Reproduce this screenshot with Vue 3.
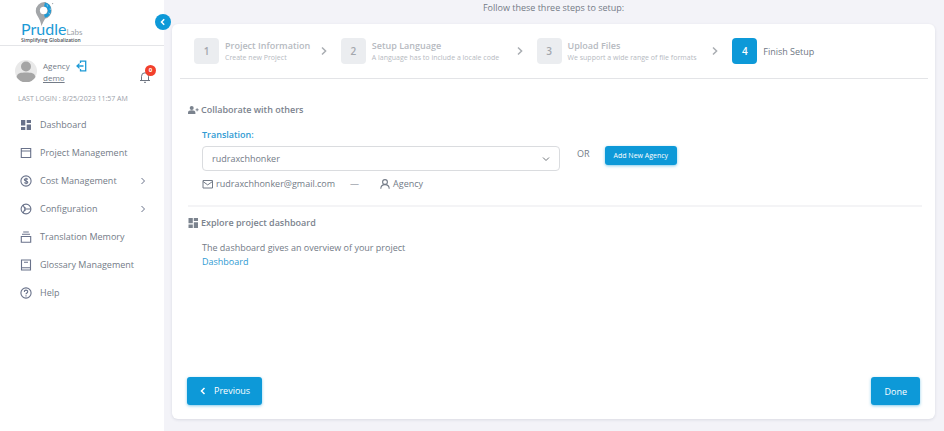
<script setup>
import { ref } from 'vue'

const menu = [
  { label: 'Dashboard', icon: 'dashboard' },
  { label: 'Project Management', icon: 'window' },
  { label: 'Cost Management', icon: 'dollar', expandable: true },
  { label: 'Configuration', icon: 'wheel', expandable: true },
  { label: 'Translation Memory', icon: 'stack' },
  { label: 'Glossary Management', icon: 'book' },
  { label: 'Help', icon: 'help' },
]

const steps = [
  { title: 'Project Information', hint: 'Create new Project' },
  { title: 'Setup Language', hint: 'A language has to include a locale code' },
  { title: 'Upload Files', hint: 'We support a wide range of file formats' },
  { title: 'Finish Setup', active: true },
]

const agency = ref('rudraxchhonker')
</script>

<template>
  <div class="page">
    <aside class="sidebar">
      <a class="brand" href="#">
        <svg class="pin" viewBox="0 0 20 24" aria-hidden="true">
          <path d="M9.500 0A8.800 8.800 0 0 0 .8 9c0 4.200 4.400 7 5.700 15 1.500-4 3-6 4-8V0z" fill="#a3a6a9" />
          <path d="M9.500 0a8.500 8.500 0 0 1 0 16.800c-1 .8-2 3-3 7.200l1-9z" fill="#a3a6a9" />
          <path d="M10 .6a7.800 7.800 0 0 1 0 15.200l-1-3.200 3-1.200 1-3-2-3-2-1z" fill="#1c9ad6" />
          <path d="M12 2.500l.6 2M14.500 7l2 .5M13.500 11l1.500 1" fill="none" stroke="#b9dff2" stroke-width=".7" />
          <circle cx="8.600" cy="8.500" r="3.700" fill="#fff" />
          <circle cx="17.600" cy="1.600" r=".7" fill="#a3a6a9" />
        </svg>
        <span class="wordmark">Prudle<span class="labs">Labs</span></span>
        <span class="tagline">Simplifying Globalization</span>
      </a>

      <div class="profile">
        <svg class="avatar" viewBox="0 0 22 22" aria-hidden="true">
          <circle cx="11" cy="11" r="11" fill="#e9e9e9" />
          <circle cx="11" cy="6.500" r="5" fill="#a5a5a5" />
          <path d="M1.500 17c1-4 4-4.500 9.500-4.500s8.500.5 9.500 4.500a11 11 0 0 1-19 0z" fill="#a5a5a5" />
        </svg>
        <div class="who">
          <span>Agency</span>
          <a href="#">demo</a>
        </div>
        <button class="icon-button logout" aria-label="Log out">
          <svg viewBox="0 0 12 12" fill="none" stroke="#1c9ad6" stroke-width="1.300">
            <path d="M4.500 3V1.200h5.200v9.600H4.500V9M1 6h6.500M3.500 3.600L1 6l2.500 2.400" />
          </svg>
        </button>
        <button class="icon-button bell" aria-label="Notifications">
          <svg viewBox="0 0 12 12" fill="none" stroke="#6d7480" stroke-width="1">
            <path d="M1 9.500h10M2.500 9.500V5.300a3.500 3.500 0 0 1 7 0v4.200M5 11.300h2" />
          </svg>
          <span class="count">0</span>
        </button>
      </div>
      <p class="last-login">LAST LOGIN : 8/25/2023 11:57 AM</p>

      <nav>
        <a v-for="item in menu" :key="item.label" href="#" class="nav-item">
          <svg viewBox="0 0 12 12" fill="none" stroke="currentColor" stroke-width="1.100" aria-hidden="true">
            <path v-if="item.icon === 'dashboard'" d="M1 1h4.300v5.500H1zM6.700 1H11v3H6.700zM1 8h4.300v3H1zM6.700 5.500H11V11H6.700z" fill="currentColor" stroke="none" />
            <path v-else-if="item.icon === 'window'" d="M1.300 1.500h9.400v9H1.300zM1.300 4h9.400" />
            <template v-else-if="item.icon === 'dollar'">
              <circle cx="6" cy="6" r="5.100" />
              <path d="M7.800 4.500C7 3.300 4.300 3.400 4.300 4.800S7.800 5.900 7.800 7.300 5 8.700 4.200 7.500M6 2.700v6.600" />
            </template>
            <template v-else-if="item.icon === 'wheel'">
              <circle cx="6" cy="6" r="4.900" />
              <path d="M5 6h6M5 6L3 1.800M5 6l-2 4.200M5 4v4" />
            </template>
            <path v-else-if="item.icon === 'stack'" d="M1.300 5.500h9.400v5.700H1.300zM2 3.200h8M3.200 1h5.600" />
            <path v-else-if="item.icon === 'book'" d="M1.500 1h9v10h-9zM1.500 8.700h9M4 3.300h4" />
            <template v-else>
              <circle cx="6" cy="6" r="5.100" />
              <path d="M4.300 4.900c0-2.300 3.400-2.300 3.400-.2C7.700 6 6 6 6 7.300M6 8.300v1.100" />
            </template>
          </svg>
          <span>{{ item.label }}</span>
          <svg v-if="item.expandable" class="more" viewBox="0 0 8 8" fill="none" stroke="currentColor" aria-hidden="true">
            <path d="M2.500 1l3 3-3 3" />
          </svg>
        </a>
      </nav>

      <button class="collapse" aria-label="Collapse menu">
        <svg viewBox="0 0 8 8" fill="none" stroke="#fff" stroke-width="1.500"><path d="M5.200 1.200L2.500 4l2.700 2.800" /></svg>
      </button>
    </aside>

    <main>
      <p class="intro">Follow these three steps to setup:</p>
      <div class="card">
        <ol class="steps">
          <li v-for="(step, i) in steps" :key="step.title" :class="{ active: step.active }">
            <span class="number">{{ i + 1 }}</span>
            <span class="step-text">
              <strong>{{ step.title }}</strong>
              <small v-if="step.hint">{{ step.hint }}</small>
            </span>
            <svg v-if="!step.active" class="arrow" viewBox="0 0 8 10" fill="none" stroke="#a9adb2" stroke-width="1.500" aria-hidden="true">
              <path d="M2 1.500L5.600 5 2 8.500" />
            </svg>
          </li>
        </ol>

        <section class="collaborate">
          <h2>
            <svg viewBox="0 0 12 10" fill="currentColor" aria-hidden="true">
              <circle cx="3.700" cy="2.900" r="2" /><path d="M0 9V7.800C0 6 1.500 5.300 3.700 5.300S7.400 6 7.400 7.800V9zM7.600 4.200h3v1h-3zM8.600 3.200h1v3h-1z" />
            </svg>
            Collaborate with others
          </h2>
          <div class="body">
            <label for="agency">Translation:</label>
            <div class="row">
              <div class="select">
                <select id="agency" v-model="agency">
                  <option>rudraxchhonker</option>
                </select>
                <svg viewBox="0 0 8 8" fill="none" stroke="#70757a" aria-hidden="true"><path d="M1 2.500l3 3 3-3" /></svg>
              </div>
              <span class="or">OR</span>
              <button class="primary small">Add New Agency</button>
            </div>
            <div class="contact">
              <span class="mail">
                <svg viewBox="0 0 12 10" fill="none" stroke="currentColor" aria-hidden="true"><path d="M1 1.500h9.500v7.500H1zM1 2.500l4.700 3.400 4.800-3.400" /></svg>
                rudraxchhonker@gmail.com
              </span>
              <span class="dash">—</span>
              <span class="role">
                <svg viewBox="0 0 12 10" fill="none" stroke="currentColor" stroke-width="1.100" aria-hidden="true"><circle cx="6" cy="3" r="2.400" /><path d="M1.800 9.800c0-5.600 8.400-5.600 8.400 0" /></svg>
                Agency
              </span>
            </div>
          </div>
        </section>

        <section class="explore">
          <h2>
            <svg viewBox="0 0 12 10" fill="currentColor" aria-hidden="true"><path d="M.5 0h4.300v5.300H.5zM5.800 0H10v3H5.800zM.5 6.500h4.300V10H.5zM5.800 4.300H10V10H5.800z" /></svg>
            Explore project dashboard
          </h2>
          <div class="body">
            <p>The dashboard gives an overview of your project</p>
            <a href="#">Dashboard</a>
          </div>
        </section>

        <footer>
          <button class="primary">
            <svg viewBox="0 0 8 8" fill="none" stroke="#fff" stroke-width="1.500" aria-hidden="true"><path d="M5.500 1L2.500 4l3 3" /></svg>
            Previous
          </button>
          <button class="primary done">Done</button>
        </footer>
      </div>
    </main>
  </div>
</template>

<style>
body {
  background: #f3f3f8;
}
</style>

<style scoped>
* {
  box-sizing: border-box;
}
.page {
  display: flex;
  min-height: 100vh;
  font: 9px/14px "Open Sans", "Noto Sans", sans-serif;
  color: #737b87;
}
p, h2, ol {
  margin: 0;
  padding: 0;
}
svg {
  flex: none;
}
button {
  font: inherit;
  border: 0;
  cursor: pointer;
}
a {
  color: inherit;
  text-decoration: none;
}

.sidebar {
  position: relative;
  flex: 0 0 164px;
  background: #fff;
}
.brand {
  display: flex;
  flex-direction: column;
  align-items: flex-start;
  height: 46px;
  padding: 2px 21px 0;
  border-bottom: 1px solid #e4e5e8;
}
.pin {
  width: 20px;
  height: 24px;
  margin-left: 14px;
}
.wordmark {
  margin-top: -6px;
  font-family: Lato, sans-serif;
  font-size: 16px;
  line-height: 18px;
  color: #1c9ad6;
}
.labs {
  font-size: 8px;
  line-height: 8px;
  color: #9da2a8;
}
.tagline {
  margin-top: -1px;
  font-size: 5px;
  line-height: 6px;
  font-weight: 600;
  color: #4b4f57;
}
.profile {
  display: flex;
  align-items: flex-start;
  padding: 14px 13px 0 15px;
}
.avatar {
  width: 22px;
  height: 22px;
}
.who {
  display: flex;
  flex-direction: column;
  width: 33px;
  margin-left: 6px;
  font-size: 8px;
  line-height: 12px;
}
.who a {
  text-decoration: underline;
}
.icon-button {
  padding: 0;
  background: none;
}
.icon-button svg {
  display: block;
  width: 12px;
  height: 12px;
}
.bell {
  position: relative;
  margin: 11px 0 0 auto;
}
.count {
  position: absolute;
  top: -6px;
  right: -5px;
  width: 11px;
  height: 11px;
  border-radius: 50%;
  background: #f2402c;
  color: #fff;
  font-size: 6px;
  line-height: 11px;
  font-weight: 700;
}
.last-login {
  padding: 8px 0 5px 18px;
  font-size: 7px;
  line-height: 14px;
  color: #9aa0a9;
  white-space: nowrap;
}
.nav-item {
  display: flex;
  align-items: center;
  height: 28px;
  padding: 0 17px 0 20px;
  gap: 8px;
}
.nav-item svg {
  width: 12px;
  height: 12px;
  color: #69728a;
}
.nav-item .more {
  width: 8px;
  height: 8px;
  margin-left: auto;
}
.collapse {
  position: absolute;
  top: 14px;
  right: -7px;
  display: grid;
  place-items: center;
  width: 16px;
  height: 16px;
  padding: 0;
  border-radius: 50%;
  background: #0d99d8;
}
.collapse svg {
  width: 8px;
  height: 8px;
}

main {
  flex: 1;
  min-width: 0;
  display: flex;
  flex-direction: column;
  padding: 0 9px 12px 8px;
}
.intro {
  padding: 1px 0 9px;
  text-align: center;
}
.card {
  flex: 1;
  display: flex;
  flex-direction: column;
  border-radius: 6px;
  background: #fff;
  box-shadow: 0 1px 3px rgba(40, 50, 80, 0.12);
}
.steps {
  display: grid;
  grid-template-columns: 3fr 4fr 4fr 4fr;
  margin: 0 7px 0 8px;
  padding: 14px 0 14px 14px;
  border-bottom: 1px solid #e3e4e7;
  list-style: none;
}
.steps li {
  display: flex;
  align-items: center;
  min-width: 0;
  color: #b6babf;
}
.number {
  flex: none;
  width: 25px;
  height: 26px;
  margin-right: 6px;
  border-radius: 4px;
  background: #ebedf0;
  color: #a3a7ad;
  font-size: 10px;
  line-height: 26px;
  font-weight: 600;
  text-align: center;
}
.step-text {
  display: flex;
  flex-direction: column;
  padding-top: 2px;
  white-space: nowrap;
}
.step-text strong {
  font-weight: 600;
  line-height: 12px;
}
.step-text small {
  font-size: 7px;
  line-height: 12px;
}
.arrow {
  width: 8px;
  height: 10px;
  margin: 0 13px 0 auto;
}
.active .number {
  background: #0d99d8;
  color: #fff;
}
.active strong {
  font-weight: 500;
  color: #6f7784;
}

section {
  margin: 0 13px 0 16px;
}
h2 {
  display: flex;
  align-items: center;
  gap: 1px;
  font-size: 9px;
  line-height: 14px;
  font-weight: 600;
  color: #7b838e;
}
h2 svg,
.contact svg {
  width: 12px;
  height: 10px;
}
.body {
  padding-left: 14px;
}
.collaborate {
  padding: 24px 0 14px;
  border-bottom: 2px solid #f4f4f6;
}
label {
  display: block;
  margin: 11px 0 4px;
  font-weight: 600;
  color: #2f9bd3;
}
.row {
  display: flex;
  align-items: flex-start;
}
.select {
  flex: 0 1 358px;
  display: grid;
  align-items: center;
}
.select select,
.select svg {
  grid-area: 1 / 1;
}
.select select {
  width: 100%;
  height: 25px;
  padding: 0 9px;
  border: 1px solid #dadcdf;
  border-radius: 4px;
  background: #fff;
  color: inherit;
  font: inherit;
  appearance: none;
}
.select svg {
  justify-self: end;
  width: 8px;
  height: 8px;
  margin-right: 10px;
  pointer-events: none;
}
.or {
  padding-top: 1px;
  margin: 0 15px 0 17px;
}
.primary {
  display: flex;
  align-items: center;
  gap: 7px;
  height: 28px;
  padding: 0 12px;
  border-radius: 3px;
  background: #0d99d8;
  color: #fff;
  font-weight: 500;
  box-shadow: 0 1px 3px rgba(13, 153, 216, 0.5);
}
.primary svg {
  width: 8px;
  height: 8px;
}
.small {
  height: 19px;
  padding: 0 9px;
  font-size: 7px;
}
.done {
  padding: 2px 13px 0;
}
.contact {
  display: flex;
  margin-top: 6px;
}
.mail,
.role {
  display: flex;
  align-items: center;
  gap: 2px;
}
.dash {
  margin: 0 20px 0 15px;
}
.explore {
  padding: 9px 0 24px;
}
.explore .body {
  padding-top: 11px;
}
.explore a {
  color: #2f9bd3;
}
footer {
  display: flex;
  justify-content: space-between;
  margin-top: auto;
  padding: 0 15px 14px;
}
</style>
